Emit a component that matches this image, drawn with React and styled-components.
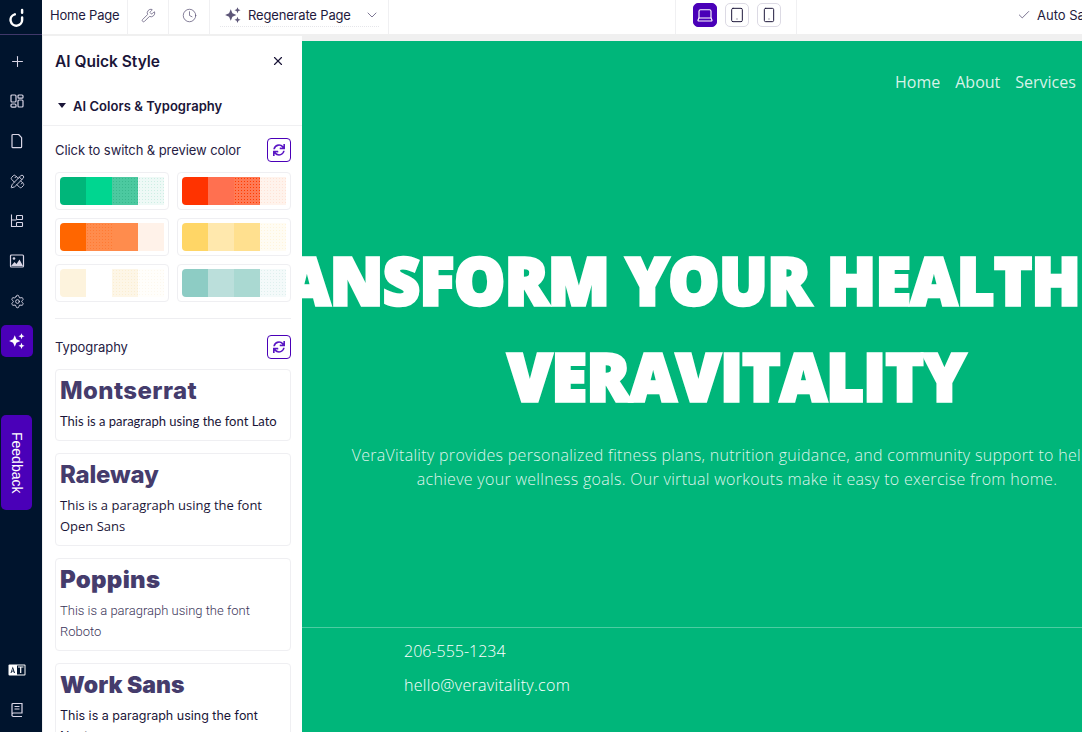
import styled, { createGlobalStyle } from "styled-components";
import {
  Wrench,
  Clock,
  ChevronDown,
  Laptop,
  Tablet,
  Smartphone,
  Check,
  Plus,
  PencilRuler,
  Settings,
  X,
} from "lucide-react";
import { FaSync } from "react-icons/fa";

const GlobalStyle = createGlobalStyle`
  html, body, #root {
    margin: 0;
    height: 100%;
    overflow: hidden;
  }
  body {
    font-family: Inter, "Liberation Sans", sans-serif;
    color: #1a1538;
  }
  * { box-sizing: border-box; }
`;

const Shell = styled.div`
  display: flex;
  height: 732px;
  width: 1082px;
  overflow: hidden;
`;

const Rail = styled.nav`
  width: 42px;
  flex: none;
  background: #00142d;
  display: flex;
  flex-direction: column;
  align-items: flex-start;
  color: #d9d6e6;
`;

const LogoBox = styled.div`
  height: 35px;
  width: 100%;
  border-bottom: 1px solid #40386a;
  display: flex;
  align-items: center;
  padding-left: 7px;
  flex: none;
`;

const RailList = styled.div`
  display: flex;
  flex-direction: column;
  padding: 10px 0 0 1px;
  gap: 8px;
`;

const RailButton = styled.div`
  width: 32px;
  height: 32px;
  border-radius: 5px;
  display: flex;
  align-items: center;
  justify-content: center;
  background: ${(p) => (p.$active ? "#4a00b8" : "transparent")};
  color: ${(p) => (p.$active ? "#fff" : "#d9d6e6")};
`;

const FeedbackTab = styled.div`
  width: 31px;
  height: 95px;
  margin: 58px 0 0 1px;
  border-radius: 5px;
  background: #4a00b8;
  color: #fff;
  font-size: 14px;
  writing-mode: vertical-rl;
  display: flex;
  align-items: center;
  justify-content: center;
  font-family: "Liberation Sans", sans-serif;
`;

const RailFooter = styled.div`
  margin-top: auto;
  padding: 0 0 6px 1px;
  display: flex;
  flex-direction: column;
  gap: 8px;
`;

const Main = styled.div`
  flex: 1;
  min-width: 0;
  display: flex;
  flex-direction: column;
`;

const TopBar = styled.header`
  height: 34px;
  flex: none;
  background: #fff;
  display: flex;
  align-items: stretch;
  font-size: 13px;
`;

const BarCell = styled.div`
  width: ${(p) => p.$w}px;
  flex: none;
  display: flex;
  align-items: center;
  justify-content: ${(p) => p.$justify || "center"};
  gap: ${(p) => p.$gap || 0}px;
  padding: 0 0 4px ${(p) => p.$pl || 0}px;
  border-right: ${(p) => (p.$plain ? "none" : "1px solid #f0f0f2")};
  color: #5d5678;
  white-space: nowrap;
  svg {
    flex: none;
  }
`;

const BarLabel = styled.span`
  color: #1f1a3d;
  letter-spacing: ${(p) => p.$spacing || "0"};
`;

const RegenCell = styled(BarCell)`
  position: relative;
  &::after {
    content: "";
    position: absolute;
    left: 10px;
    right: 9px;
    bottom: 7px;
    border-bottom: 1px dotted #e6e6ea;
  }
`;

const RegenChevron = styled(ChevronDown)`
  margin-left: 7px;
`;

const DeviceButton = styled.div`
  width: 24px;
  height: 24px;
  border-radius: 5px;
  display: flex;
  align-items: center;
  justify-content: center;
  background: ${(p) => (p.$active ? "#4a00b8" : "#fff")};
  border: 1px solid ${(p) => (p.$active ? "#4a00b8" : "#dcdae4")};
  color: ${(p) => (p.$active ? "#fff" : "#1f1a3d")};
`;

const Body = styled.div`
  flex: 1;
  min-height: 0;
  display: flex;
  background: #f0f0f0;
  padding: 2px 0 0 1px;
`;

const Panel = styled.aside`
  width: 259px;
  flex: none;
  background: #fff;
  overflow: hidden;
`;

const PanelHead = styled.div`
  display: flex;
  align-items: center;
  justify-content: space-between;
  padding: 0 17px 0 12px;
  height: 50px;
`;

const PanelTitle = styled.h2`
  margin: 0;
  font-size: 15.5px;
  font-weight: 600;
  color: #1a1538;
`;

const Accordion = styled.div`
  height: 40px;
  display: flex;
  align-items: center;
  gap: 7px;
  padding-left: 15px;
  border-bottom: 1px solid #f0f0f2;
  font-size: 13px;
  font-weight: 600;
  letter-spacing: 0.05px;
`;

const Caret = styled.span`
  width: 0;
  height: 0;
  border-left: 4.5px solid transparent;
  border-right: 4.5px solid transparent;
  border-top: 5px solid #1a1538;
`;

const Section = styled.div`
  padding: 12px 11px 0 12px;
`;

const SectionRow = styled.div`
  height: 24px;
  display: flex;
  align-items: center;
  justify-content: space-between;
  font-size: 13px;
  color: #262144;
  letter-spacing: -0.08px;
`;

const RefreshButton = styled.div`
  width: 24px;
  height: 24px;
  border: 1px solid #4a00b8;
  border-radius: 4px;
  color: #5a16c4;
  display: flex;
  align-items: center;
  justify-content: center;
`;

const PaletteGrid = styled.div`
  display: grid;
  grid-template-columns: 114px 114px;
  gap: 8px;
  margin-top: 10px;
`;

const PaletteCard = styled.div`
  height: 38px;
  border: 1px solid #efeff2;
  border-radius: 4px;
  padding: 4px;
  display: flex;
`;

const Swatch = styled.div`
  width: 26px;
  background-color: ${(p) => p.$color};
  background-image: ${(p) =>
    p.$dots ? `radial-gradient(${p.$dots} 0.6px, transparent 0.8px)` : "none"};
  background-size: 3px 3px;
  &:first-child {
    border-radius: 4px 0 0 4px;
  }
`;

const Divider = styled.hr`
  border: 0;
  border-top: 1px solid #eeeef1;
  margin: 16px 0 16px;
`;

const FontList = styled.div`
  display: flex;
  flex-direction: column;
  gap: 12px;
  margin-top: 10px;
`;

const FontCard = styled.div`
  border: 1px solid #efeff2;
  border-radius: 4px;
  padding: 6px 4px 8px;
`;

const FontTitle = styled.div`
  font-family: ${(p) => p.$family};
  font-size: ${(p) => p.$size}px;
  font-weight: ${(p) => p.$weight};
  letter-spacing: ${(p) => p.$spacing}px;
  color: #453c6c;
  line-height: 30px;
`;

const FontText = styled.p`
  margin: 5px 0 0;
  font-family: ${(p) => p.$family};
  font-weight: ${(p) => p.$weight || 400};
  color: ${(p) => p.$color || "#1a1538"};
  font-size: ${(p) => p.$size || 13}px;
  line-height: 21px;
`;

const Stage = styled.main`
  flex: 1;
  min-width: 0;
  margin-top: 5px;
  background: #00b67a;
  overflow: hidden;
`;

const Page = styled.div`
  width: 870px;
  color: #fff;
  font-family: "Open Sans", sans-serif;
`;

const SiteNav = styled.div`
  display: flex;
  gap: 15px;
  padding: 30px 0 0 593px;
  font-size: 16px;
  line-height: 22px;
  color: rgba(255, 255, 255, 0.85);
  white-space: nowrap;
`;

const Hero = styled.section`
  height: 535px;
  padding-top: 139px;
  display: flex;
  flex-direction: column;
  align-items: center;
  border-bottom: 1px solid rgba(255, 255, 255, 0.3);
`;

const HeroLine = styled.div`
  flex: none;
  white-space: nowrap;
  font-size: 65px;
  line-height: 96px;
  font-weight: 800;
  color: #fff;
  -webkit-text-stroke: 3.5px #fff;
  transform: scaleX(0.98);
`;

const HeroText = styled.p`
  margin: 19px 0 0;
  flex: none;
  width: 900px;
  text-align: center;
  font-size: 16px;
  line-height: 24px;
  font-weight: 300;
  letter-spacing: 0.3px;
  color: rgba(255, 255, 255, 0.88);
`;

const Contact = styled.div`
  padding: 12px 0 0 102px;
  display: flex;
  flex-direction: column;
  gap: 12px;
  font-size: 16px;
  line-height: 22px;
  font-weight: 300;
`;

const ContactLine = styled.span`
  letter-spacing: ${(p) => p.$spacing || 0}px;
`;

const LogoIcon = () => (
  <svg width="20" height="20" viewBox="0 0 18 18" fill="none" stroke="#fff" strokeWidth="2.2" strokeLinecap="round">
    <path d="M7 6.6A5.2 5.2 0 1 0 13.6 11.3V9.5" />
    <path d="M13.6 2.6v2.6" />
  </svg>
);

const WidgetsIcon = () => (
  <svg width="16" height="16" viewBox="0 0 16 16" fill="none" stroke="currentColor" strokeWidth="1.2">
    <rect x="2" y="2" width="5" height="7" rx="1" />
    <rect x="2" y="11" width="5" height="3.2" rx="1" />
    <rect x="9" y="2" width="5" height="3.2" rx="1" />
    <rect x="9" y="7" width="5" height="7" rx="1" />
  </svg>
);

const PageIcon = () => (
  <svg width="16" height="16" viewBox="0 0 16 16" fill="none" stroke="currentColor" strokeWidth="1.2" strokeLinejoin="round">
    <path d="M3 2.500a1 1 0 0 1 1-1h5.600l3 3.200v9a1 1 0 0 1-1 1H4a1 1 0 0 1-1-1z" />
  </svg>
);

const TreeIcon = () => (
  <svg width="16" height="16" viewBox="0 0 16 16" fill="none" stroke="currentColor" strokeWidth="1.1">
    <path d="M2.500 1.500v12h5M2.500 7h5" />
    <rect x="7.500" y="2.500" width="6" height="4" rx=".6" />
    <rect x="7.500" y="9.500" width="6" height="4" rx=".6" />
  </svg>
);

const ImageIcon = () => (
  <svg width="16" height="16" viewBox="0 0 16 16">
    <rect x="1.500" y="2" width="13" height="12" rx="1" fill="none" stroke="currentColor" strokeWidth="1.200" />
    <circle cx="5" cy="5.500" r="1.300" fill="currentColor" />
    <path d="M2 13l3.500-4 2 2 3-4.500 3.500 6.500z" fill="currentColor" />
  </svg>
);

const SparkIcon = ({ size = 16 }) => (
  <svg width={size} height={size} viewBox="0 0 16 16" fill="currentColor">
    <path d="M6 2.800l1.500 3.700L11 8 7.500 9.500 6 13.200 4.500 9.500 1 8l3.500-1.500z" />
    <path d="M12 1l.8 1.900 1.900.8-1.900.8L12 6.400l-.8-1.900-1.900-.8 1.900-.8z" />
    <path d="M12 9.600l.8 1.900 1.900.8-1.900.8L12 15l-.8-1.900-1.900-.8 1.900-.8z" />
  </svg>
);

const LanguageIcon = () => (
  <svg width="18" height="12" viewBox="0 0 18 12">
    <rect x="0.500" y="0.500" width="17" height="11" rx="1" fill="#fff" />
    <rect x="9" y="1.500" width="7.500" height="9" fill="#00142d" />
    <path d="M4.800 2.500L7 9H5.900l-.4-1.400H3.900L3.500 9H2.500zM4.100 6.700h1.200L4.700 4.600z" fill="#00142d" />
    <path d="M10 3h5.500M12.700 3v6" stroke="#fff" strokeWidth="1.200" />
  </svg>
);

const BookIcon = () => (
  <svg width="16" height="16" viewBox="0 0 16 16" fill="none" stroke="currentColor" strokeWidth="1.200">
    <path d="M3 13V2.500a1 1 0 0 1 1-1h9V11H4.300A1.400 1.400 0 0 0 3 12.700a1.400 1.400 0 0 0 1.300 1.800H13" />
    <path d="M5.500 4.500h5M5.500 7h5" />
  </svg>
);

const railItems = [
  <Plus key="plus" size={17} strokeWidth={1.5} />,
  <WidgetsIcon key="widgets" />,
  <PageIcon key="page" />,
  <PencilRuler key="ruler" size={15} strokeWidth={1.5} />,
  <TreeIcon key="tree" />,
  <ImageIcon key="image" />,
  <Settings key="settings" size={15} strokeWidth={1.5} />,
];

const palettes = [
  [
    { color: "#00b67a" },
    { color: "#00d690" },
    { color: "#4cc9a0", dots: "#39b98e" },
    { color: "#eef9f6", dots: "#cdeee4" },
  ],
  [
    { color: "#ff3300" },
    { color: "#ff7050" },
    { color: "#ff7a55", dots: "#ff3c00" },
    { color: "#fff3ec", dots: "#ffe3d6" },
  ],
  [
    { color: "#ff6600" },
    { color: "#ff8c4d", dots: "#ff7a33" },
    { color: "#ff8c4d" },
    { color: "#fff2e9" },
  ],
  [
    { color: "#ffd666" },
    { color: "#ffe8ad" },
    { color: "#ffe08f" },
    { color: "#fffcf3", dots: "#fff5dc" },
  ],
  [
    { color: "#fdf3dd" },
    { color: "#ffffff" },
    { color: "#fdf6e7", dots: "#fbeed2" },
    { color: "#fffefb", dots: "#fdf8ee" },
  ],
  [
    { color: "#8dccc4" },
    { color: "#bbdfdb" },
    { color: "#aad9d2" },
    { color: "#f4fafa", dots: "#dff0ee" },
  ],
];

const fonts = [
  {
    name: "Montserrat",
    title: { $family: "Inter, sans-serif", $size: 24, $weight: 800, $spacing: 0.4 },
    body: { $family: "Lato, sans-serif" },
    text: "This is a paragraph using the font Lato",
  },
  {
    name: "Raleway",
    title: { $family: "Inter, sans-serif", $size: 24, $weight: 800, $spacing: -0.2 },
    body: { $family: "'Open Sans', sans-serif" },
    text: "This is a paragraph using the font Open Sans",
  },
  {
    name: "Poppins",
    title: { $family: "Inter, sans-serif", $size: 24, $weight: 900, $spacing: 0.3 },
    body: { $family: "Roboto, sans-serif", $weight: 300, $color: "#3a3458" },
    text: "This is a paragraph using the font Roboto",
  },
  {
    name: "Work Sans",
    title: { $family: "Inter, sans-serif", $size: 23, $weight: 900, $spacing: 0 },
    body: { $family: "Inter, sans-serif", $size: 12.5 },
    text: "This is a paragraph using the font Nunito",
  },
];

export default function App() {
  return (
    <Shell>
      <GlobalStyle />
      <Rail>
        <LogoBox>
          <LogoIcon />
        </LogoBox>
        <RailList>
          {railItems.map((icon) => (
            <RailButton key={icon.key}>{icon}</RailButton>
          ))}
          <RailButton $active>
            <SparkIcon size={18} />
          </RailButton>
        </RailList>
        <FeedbackTab>Feedback</FeedbackTab>
        <RailFooter>
          <RailButton>
            <LanguageIcon />
          </RailButton>
          <RailButton>
            <BookIcon />
          </RailButton>
        </RailFooter>
      </Rail>

      <Main>
        <TopBar>
          <BarCell $w={86} $justify="flex-start" $pl={8}>
            <BarLabel $spacing="-0.2px">Home Page</BarLabel>
          </BarCell>
          <BarCell $w={41}>
            <Wrench size={15} strokeWidth={1.2} />
          </BarCell>
          <BarCell $w={41}>
            <Clock size={15} strokeWidth={1.2} />
          </BarCell>
          <RegenCell $w={179} $justify="flex-start" $pl={14} $gap={6}>
            <SparkIcon size={18} />
            <BarLabel $spacing="-0.17px">Regenerate Page</BarLabel>
            <RegenChevron size={16} strokeWidth={1.2} />
          </RegenCell>
          <BarCell $w={287} />
          <BarCell $w={121} $justify="flex-start" $pl={17} $gap={8}>
            <DeviceButton $active>
              <Laptop size={18} strokeWidth={1.5} />
            </DeviceButton>
            <DeviceButton>
              <Tablet size={16} strokeWidth={1.5} />
            </DeviceButton>
            <DeviceButton>
              <Smartphone size={16} strokeWidth={1.5} />
            </DeviceButton>
          </BarCell>
          <BarCell $w={285} $plain $justify="flex-start" $pl={220} $gap={6}>
            <Check size={14} strokeWidth={1.4} />
            <BarLabel>Auto Save</BarLabel>
          </BarCell>
        </TopBar>

        <Body>
          <Panel>
            <PanelHead>
              <PanelTitle>AI Quick Style</PanelTitle>
              <X size={14} strokeWidth={2} color="#1a1538" />
            </PanelHead>
            <Accordion>
              <Caret />
              AI Colors &amp; Typography
            </Accordion>
            <Section>
              <SectionRow>
                Click to switch &amp; preview color
                <RefreshButton>
                  <FaSync size={12} />
                </RefreshButton>
              </SectionRow>
              <PaletteGrid>
                {palettes.map((swatches, i) => (
                  <PaletteCard key={i}>
                    {swatches.map((s, j) => (
                      <Swatch key={j} $color={s.color} $dots={s.dots} />
                    ))}
                  </PaletteCard>
                ))}
              </PaletteGrid>
              <Divider />
              <SectionRow>
                Typography
                <RefreshButton>
                  <FaSync size={12} />
                </RefreshButton>
              </SectionRow>
              <FontList>
                {fonts.map((f) => (
                  <FontCard key={f.name}>
                    <FontTitle {...f.title}>{f.name}</FontTitle>
                    <FontText {...f.body}>{f.text}</FontText>
                  </FontCard>
                ))}
              </FontList>
            </Section>
          </Panel>

          <Stage>
            <Page>
              <SiteNav>
                <span>Home</span>
                <span>About</span>
                <span>Services</span>
              </SiteNav>
              <Hero>
                <HeroLine>TRANSFORM YOUR HEALTH WITH</HeroLine>
                <HeroLine>VERAVITALITY</HeroLine>
                <HeroText>
                  VeraVitality provides personalized fitness plans, nutrition guidance, and community support to help you
                  <br />
                  achieve your wellness goals. Our virtual workouts make it easy to exercise from home.
                </HeroText>
              </Hero>
              <Contact>
                <ContactLine>206-555-1234</ContactLine>
                <ContactLine $spacing={0.3}>hello@veravitality.com</ContactLine>
              </Contact>
            </Page>
          </Stage>
        </Body>
      </Main>
    </Shell>
  );
}
